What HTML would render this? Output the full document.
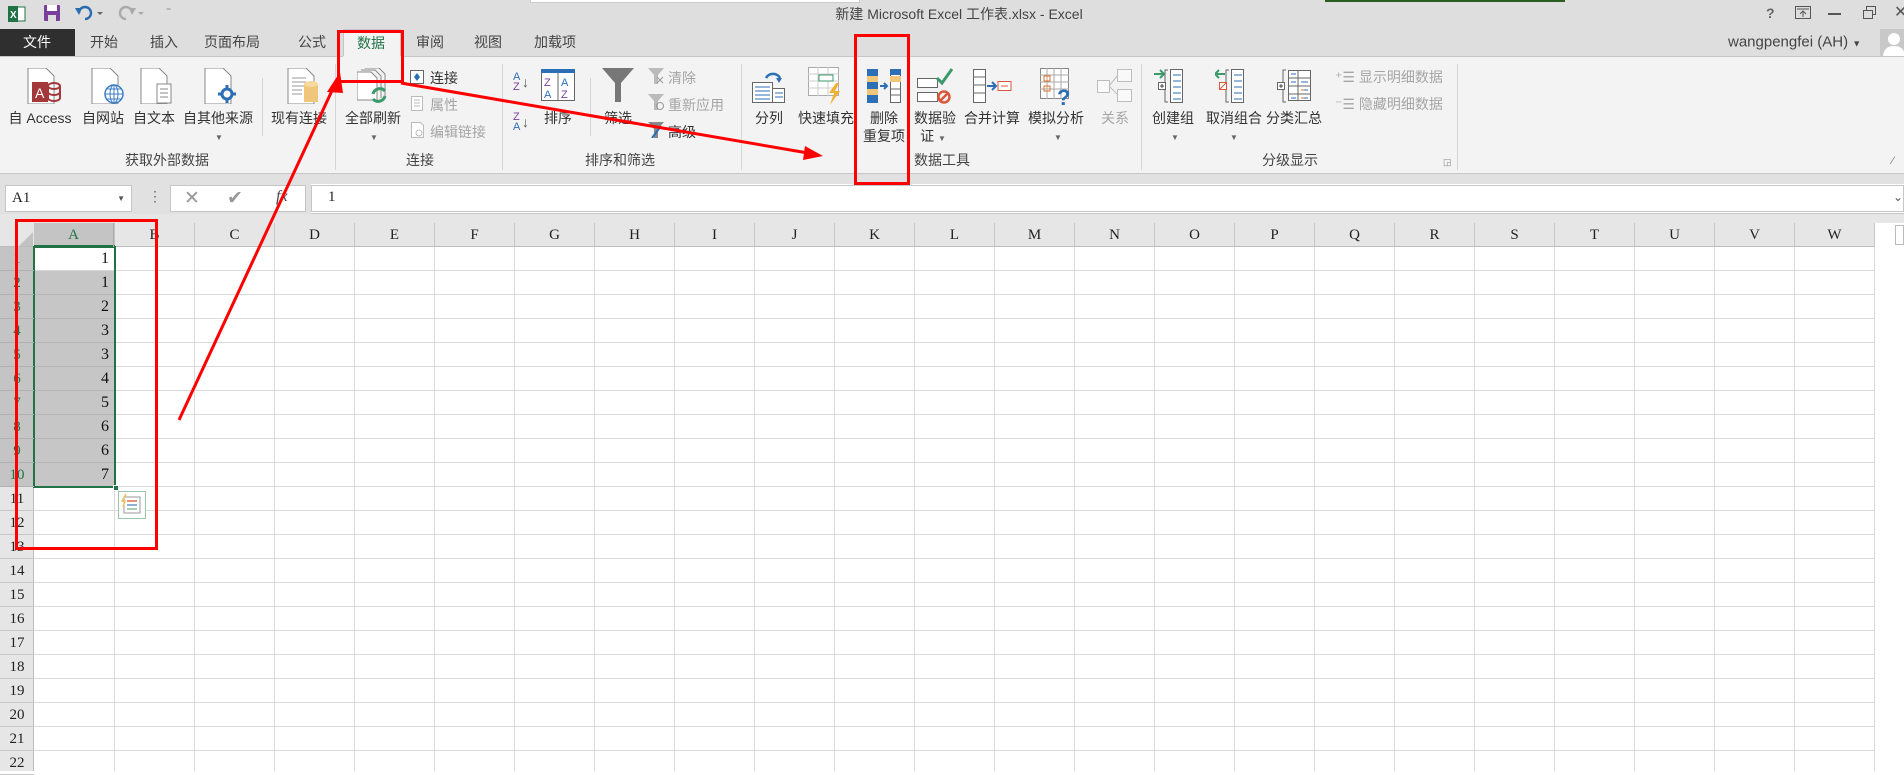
<!DOCTYPE html>
<html><head><meta charset="utf-8"><style>
*{margin:0;padding:0;box-sizing:border-box}
body{width:1904px;height:771px;overflow:hidden;background:#fff;position:relative;font-family:"Liberation Sans","Noto Sans CJK SC",sans-serif;font-size:14px;color:#444}
.a{position:absolute;white-space:nowrap}
.t{top:42px;transform:translate(-50%,-50%);font-size:14px;color:#444}
.lb{top:118px;transform:translate(-50%,-50%);color:#333}
.lb2{top:136px;transform:translate(-50%,-50%);color:#333}
.gl{top:160px;transform:translate(-50%,-50%);color:#444}
.sm{font-size:14px;color:#333}
.dis{color:#a5a5a5}
.sep{position:absolute;width:1px;background:#d5d5d5}
.ch{position:absolute;top:223px;height:24px;width:80px;border-right:1px solid #c6c6c6;text-align:center;line-height:24px;font-family:"Liberation Serif",serif;font-size:15px;color:#222}
.rh{position:absolute;left:0;width:34px;height:24px;border-bottom:1px solid #c6c6c6;text-align:center;line-height:24px;font-family:"Liberation Serif",serif;font-size:15px;color:#222}
.cv{position:absolute;left:34px;width:81px;height:24px;text-align:right;padding-right:6px;line-height:24px;font-family:"Liberation Serif",serif;font-size:16px;color:#111}
.dd{position:absolute;font-size:8px;color:#666;transform:translateX(-50%)}
</style></head><body>
<div class="a" style="left:0;top:0;width:1904px;height:56px;background:#dedede"></div>
<div class="a" style="left:530px;top:0;width:330px;height:3px;background:#fff;border:1px solid #ccc;border-top:none"></div>
<div class="a" style="left:1325px;top:0;width:240px;height:2px;background:#2a5d1f"></div>
<svg class="a" style="left:8px;top:5px" width="18" height="18"><rect x="5" y="2" width="12" height="14" fill="#fff" stroke="#217346"/><rect x="0" y="1" width="10" height="16" fill="#217346"/><text x="2" y="13" font-size="10" fill="#fff" font-family="Liberation Sans" font-weight="bold">X</text></svg>
<svg class="a" style="left:44px;top:5px" width="16" height="16"><rect x="0" y="0" width="16" height="16" rx="1" fill="#7a3e9d"/><rect x="3" y="0" width="10" height="6" fill="#fff"/><rect x="4" y="10" width="8" height="6" fill="#ddd"/></svg>
<svg class="a" style="left:75px;top:5px" width="30" height="16"><path d="M4 8 A6 6 0 1 1 10 14" fill="none" stroke="#2b6cb0" stroke-width="2.4"/><path d="M0 3 L7 3 L4 10Z" fill="#2b6cb0"/><path d="M22 7 l3 3 l3 -3z" fill="#666"/></svg>
<svg class="a" style="left:118px;top:5px" width="30" height="16"><path d="M14 8 A6 6 0 1 0 8 14" fill="none" stroke="#aaa" stroke-width="2.4"/><path d="M18 3 L11 3 L14 10Z" fill="#aaa"/><path d="M20 7 l3 3 l3 -3z" fill="#aaa"/></svg>
<div class="a" style="left:166px;top:6px;font-size:10px;color:#777">⁼</div>
<div class="a" style="left:959px;top:14px;transform:translate(-50%,-50%);font-size:14px;color:#444">新建 Microsoft Excel 工作表.xlsx - Excel</div>
<div class="a" style="left:1766px;top:5px;font-size:14px;color:#666;font-weight:bold">?</div>
<svg class="a" style="left:1795px;top:6px" width="16" height="14"><rect x="0.5" y="0.5" width="15" height="12" fill="none" stroke="#555"/><path d="M2 3h12M8 5v6M5 8l3-3 3 3" fill="none" stroke="#555"/></svg>
<div class="a" style="left:1828px;top:13px;width:13px;height:2px;background:#555"></div>
<svg class="a" style="left:1863px;top:6px" width="14" height="13"><rect x="0.5" y="4.5" width="9" height="8" fill="none" stroke="#555"/><path d="M3.5 4.5v-4h9v8h-3" fill="none" stroke="#555"/></svg>
<div class="a" style="left:1894px;top:2px;font-size:16px;color:#555">✕</div>
<div class="a" style="left:1728px;top:42px;transform:translateY(-50%);font-size:15px;color:#444">wangpengfei (AH) <span style="font-size:9px">▼</span></div>
<svg class="a" style="left:1880px;top:29px" width="24" height="27"><rect width="24" height="27" fill="#c8c8c8"/><circle cx="14" cy="10" r="6" fill="#fff"/><path d="M3 27 Q4 17 14 17 Q24 17 25 27Z" fill="#fff"/></svg>
<div class="a" style="left:0;top:29px;width:75px;height:27px;background:#2f2f2f"></div>
<div class="a t" style="left:37px;color:#fff">文件</div>
<div class="a t" style="left:104px">开始</div>
<div class="a t" style="left:164px">插入</div>
<div class="a t" style="left:232px">页面布局</div>
<div class="a t" style="left:312px">公式</div>
<div class="a" style="left:343px;top:29px;width:58px;height:28px;background:#f3f3f3;border:1px solid #c6c6c6;border-bottom:none"></div>
<div class="a t" style="left:371px;color:#217346;top:43px">数据</div>
<div class="a t" style="left:430px">审阅</div>
<div class="a t" style="left:488px">视图</div>
<div class="a t" style="left:555px">加载项</div>
<div class="a" style="left:0;top:56px;width:1904px;height:118px;background:#f3f3f3;border-top:1px solid #c6c6c6;border-bottom:1px solid #c6c6c6"></div>
<div class="a" style="left:343px;top:56px;width:58px;height:2px;background:#f3f3f3"></div>
<div class="a" style="left:0;top:174px;width:1904px;height:10px;background:#e1e1e1"></div>
<svg class="a" style="left:26px;top:68px" width="38" height="36"><path d="M2 0h18l8 8v28H2z" fill="#fff" stroke="#888"/><rect x="6" y="14" width="16" height="20" fill="#a4373a"/><text x="9" y="30" fill="#fff" font-size="14" font-family="Liberation Sans">A</text><ellipse cx="28" cy="18" rx="6" ry="3" fill="none" stroke="#a4373a" stroke-width="2"/><path d="M22 18v12M34 18v12M22 24a6 3 0 0 0 12 0M22 30a6 3 0 0 0 12 0" fill="none" stroke="#a4373a" stroke-width="2"/></svg>
<svg class="a" style="left:90px;top:68px" width="36" height="36"><path d="M2 0h18l8 8v28H2z" fill="#fff" stroke="#888"/><circle cx="24" cy="26" r="9" fill="#fff" stroke="#3b7dc4" stroke-width="1.5"/><path d="M15 26h18M24 17v18M17 21h14M17 31h14" stroke="#3b7dc4"/><ellipse cx="24" cy="26" rx="4" ry="9" fill="none" stroke="#3b7dc4"/></svg>
<svg class="a" style="left:139px;top:68px" width="36" height="36"><path d="M2 0h18l8 8v28H2z" fill="#fff" stroke="#888"/><path d="M18 16h14v19H18z" fill="#fff" stroke="#888"/><path d="M21 21h8M21 25h8M21 29h8" stroke="#888"/></svg>
<svg class="a" style="left:203px;top:68px" width="36" height="36"><path d="M2 0h18l8 8v28H2z" fill="#fff" stroke="#888"/><circle cx="24" cy="26" r="5" fill="none" stroke="#2d6fb7" stroke-width="3"/><path d="M24 17v4M24 31v4M15 26h4M29 26h4" stroke="#2d6fb7" stroke-width="3"/></svg>
<div class="a lb" style="left:40px">自 Access</div>
<div class="a lb" style="left:103px">自网站</div>
<div class="a lb" style="left:154px">自文本</div>
<div class="a lb" style="left:218px">自其他来源</div>
<div class="dd" style="left:219px;top:133px">▼</div>
<div class="sep" style="left:262px;top:78px;height:58px"></div>
<svg class="a" style="left:286px;top:68px" width="36" height="36"><path d="M2 0h18l8 8v28H2z" fill="#fff" stroke="#888"/><path d="M6 10h14M6 14h14M6 18h14M6 22h10M6 26h10" stroke="#999"/><rect x="18" y="16" width="14" height="18" fill="#f0c77a"/><ellipse cx="25" cy="16" rx="7" ry="3" fill="#f6d99c"/></svg>
<div class="a lb" style="left:299px">现有连接</div>
<div class="a gl" style="left:167px">获取外部数据</div>
<div class="sep" style="left:335px;top:64px;height:106px"></div>
<svg class="a" style="left:357px;top:68px" width="34" height="36"><path d="M0 4h14l6 6v22H0z" fill="#fff" stroke="#888"/><path d="M4 2h14l6 6v22" fill="none" stroke="#888"/><path d="M8 0h14l6 6v22" fill="none" stroke="#888"/><path d="M16 26a7 7 0 0 1 12 -3M28 28a7 7 0 0 1 -12 3" fill="none" stroke="#3a9a6a" stroke-width="3"/></svg>
<div class="a lb" style="left:373px">全部刷新</div>
<div class="dd" style="left:374px;top:133px">▼</div>
<svg class="a" style="left:410px;top:70px" width="14" height="14"><rect x="0.5" y="0.5" width="13" height="13" fill="#fff" stroke="#666"/><path d="M7 3l3 4-3 4-3-4z" fill="#2d6fb7"/></svg>
<div class="a sm" style="left:430px;top:68px">连接</div>
<svg class="a dis" style="left:411px;top:96px" width="12" height="15"><rect x="0.5" y="0.5" width="11" height="14" fill="#fff" stroke="#bbb"/><path d="M3 4h6M3 7h6M3 10h6" stroke="#bbb"/></svg>
<div class="a sm dis" style="left:430px;top:95px">属性</div>
<svg class="a" style="left:411px;top:122px" width="14" height="16"><path d="M0.5 0.5h9l3 3v12h-12z" fill="#fff" stroke="#bbb"/><circle cx="8" cy="11" r="3" fill="none" stroke="#bbb"/></svg>
<div class="a sm dis" style="left:430px;top:122px">编辑链接</div>
<div class="a gl" style="left:420px">连接</div>
<div class="sep" style="left:502px;top:64px;height:106px"></div>
<div class="a" style="left:513px;top:72px;font-size:11px;line-height:10px;color:#2d6fb7">A<br><span style="color:#7a3e9d">Z</span></div><div class="a" style="left:522px;top:74px;font-size:14px;color:#555">↓</div>
<div class="a" style="left:513px;top:112px;font-size:11px;line-height:10px;color:#7a3e9d">Z<br><span style="color:#2d6fb7">A</span></div><div class="a" style="left:522px;top:114px;font-size:14px;color:#555">↓</div>
<svg class="a" style="left:541px;top:69px" width="34" height="32"><rect x="0.5" y="0.5" width="33" height="31" fill="#fff" stroke="#666"/><rect x="0" y="0" width="34" height="4" fill="#2d6fb7"/><path d="M17 4v28" stroke="#666"/><text x="3" y="17" font-size="11" fill="#7a3e9d">Z</text><text x="3" y="29" font-size="11" fill="#2d6fb7">A</text><text x="20" y="17" font-size="11" fill="#2d6fb7">A</text><text x="20" y="29" font-size="11" fill="#7a3e9d">Z</text></svg>
<div class="a lb" style="left:558px">排序</div>
<div class="sep" style="left:590px;top:78px;height:58px"></div>
<svg class="a" style="left:602px;top:68px" width="32" height="34"><path d="M0 0h32L19 15v19h-6V15z" fill="#777"/></svg>
<div class="a lb" style="left:618px">筛选</div>
<svg class="a" style="left:648px;top:68px" width="16" height="16"><path d="M0 0h16l-6 7v9h-4V7z" fill="#bbb"/><path d="M9 9l6 6M15 9l-6 6" stroke="#999"/></svg>
<div class="a sm dis" style="left:668px;top:68px">清除</div>
<svg class="a" style="left:648px;top:94px" width="16" height="16"><path d="M0 0h16l-6 7v9h-4V7z" fill="#bbb"/><circle cx="12" cy="12" r="3.5" fill="none" stroke="#999"/></svg>
<div class="a sm dis" style="left:668px;top:95px">重新应用</div>
<svg class="a" style="left:648px;top:122px" width="16" height="16"><path d="M0 0h16l-6 7v9h-4V7z" fill="#888"/><path d="M13 4L4 16" stroke="#2d6fb7" stroke-width="2"/></svg>
<div class="a sm" style="left:668px;top:122px">高级</div>
<div class="a gl" style="left:620px">排序和筛选</div>
<div class="sep" style="left:741px;top:64px;height:106px"></div>
<svg class="a" style="left:752px;top:68px" width="34" height="36"><path d="M14 10a8 8 0 0 1 14 0" fill="none" stroke="#2d6fb7" stroke-width="2.5"/><path d="M24 10l6 0l-3 5z" fill="#2d6fb7"/><rect x="0.5" y="14.5" width="20" height="20" fill="#fff" stroke="#666"/><path d="M3 19h15M3 23h15M3 27h15M3 31h15" stroke="#2d6fb7"/><rect x="20.5" y="20.5" width="12" height="14" fill="#fff" stroke="#666"/><path d="M23 25h8M23 29h8" stroke="#2d6fb7"/></svg>
<div class="a lb" style="left:769px">分列</div>
<svg class="a" style="left:808px;top:67px" width="36" height="38"><rect x="0.5" y="0.5" width="30" height="28" fill="#fff" stroke="#aaa"/><path d="M0 7h31M0 14h31M0 21h31M10 0v29M20 0v29" stroke="#ccc"/><rect x="11" y="8" width="14" height="6" fill="#fff" stroke="#3a9a6a"/><path d="M28 16l-7 10h5l-4 12 10-14h-5l4-8z" fill="#f0b030"/></svg>
<div class="a lb" style="left:826px">快速填充</div>
<svg class="a" style="left:866px;top:68px" width="36" height="36"><rect x="1" y="1" width="11" height="34" fill="#2d6fb7"/><rect x="1" y="8" width="11" height="6" fill="#f0c77a"/><rect x="1" y="21" width="11" height="6" fill="#f0c77a"/><rect x="24.5" y="1.5" width="10" height="33" fill="#fff" stroke="#666"/><rect x="24" y="1" width="11" height="6" fill="#2d6fb7"/><rect x="24" y="8" width="11" height="6" fill="#f0c77a"/><path d="M25 21h10M25 27h10" stroke="#666"/><path d="M14 18h6M18 15l3 3-3 3" fill="none" stroke="#2d6fb7" stroke-width="2"/></svg>
<div class="a lb" style="left:884px">删除</div>
<div class="a lb2" style="left:884px">重复项</div>
<svg class="a" style="left:917px;top:68px" width="36" height="36"><rect x="0.5" y="10.5" width="20" height="9" fill="#fff" stroke="#666"/><rect x="0.5" y="24.5" width="20" height="9" fill="#fff" stroke="#666"/><path d="M20 10l5 5 10-14" fill="none" stroke="#3a9a6a" stroke-width="3"/><circle cx="27" cy="29" r="5.5" fill="none" stroke="#d9583b" stroke-width="2.5"/><path d="M23 33l8-8" stroke="#d9583b" stroke-width="2.5"/></svg>
<div class="a lb" style="left:935px">数据验</div>
<div class="a lb2" style="left:933px">证 <span style="font-size:8px;color:#666">▼</span></div>
<svg class="a" style="left:972px;top:68px" width="40" height="36"><rect x="1.5" y="1.5" width="12" height="33" fill="#fff" stroke="#666"/><path d="M2 9h12M2 17h12M2 25h12" stroke="#666"/><path d="M15 18h8M20 14l4 4-4 4" fill="none" stroke="#2d6fb7" stroke-width="2"/><rect x="26" y="13.5" width="13" height="9" fill="#fff" stroke="#d9583b"/><path d="M29 18h7" stroke="#d9583b"/></svg>
<div class="a lb" style="left:992px">合并计算</div>
<svg class="a" style="left:1040px;top:68px" width="34" height="38"><rect x="0.5" y="0.5" width="28" height="30" fill="#fff" stroke="#888"/><path d="M0 7h29M0 14h29M0 21h29M7 0v31M14 0v31M21 0v31" stroke="#aaa"/><rect x="4" y="8" width="6" height="5" fill="none" stroke="#e07020"/><rect x="4" y="18" width="6" height="5" fill="none" stroke="#e07020"/><text x="17" y="37" font-size="22" font-weight="bold" fill="#2d6fb7" font-family="Liberation Sans">?</text></svg>
<div class="a lb" style="left:1056px">模拟分析</div>
<div class="dd" style="left:1058px;top:133px">▼</div>
<svg class="a" style="left:1097px;top:68px" width="36" height="36" opacity=".5"><rect x="0.5" y="12.5" width="12" height="12" fill="#fff" stroke="#888"/><rect x="20.5" y="1.5" width="14" height="12" fill="#fff" stroke="#888"/><rect x="20.5" y="21.5" width="14" height="12" fill="#fff" stroke="#888"/><path d="M12 18l9-11M12 18l9 9" stroke="#888"/></svg>
<div class="a lb dis" style="left:1115px">关系</div>
<div class="a gl" style="left:942px">数据工具</div>
<div class="sep" style="left:1141px;top:64px;height:106px"></div>
<svg class="a" style="left:1154px;top:68px" width="36" height="36"><path d="M0 6h10M6 2l4 4-4 4" fill="none" stroke="#3a9a6a" stroke-width="2"/><path d="M14 2h-3v32h3" fill="none" stroke="#666"/><rect x="16.5" y="1.5" width="12" height="33" fill="#fff" stroke="#666"/><path d="M19 7h8M19 13h8M19 19h8M19 25h8M19 31h8" stroke="#2d6fb7"/><rect x="4.5" y="14.5" width="7" height="7" fill="#fff" stroke="#666"/><path d="M6 18h4M8 16v4" stroke="#444"/></svg>
<div class="a lb" style="left:1173px">创建组</div>
<div class="dd" style="left:1175px;top:133px">▼</div>
<svg class="a" style="left:1215px;top:68px" width="36" height="36"><path d="M10 6H0M4 2L0 6l4 4" fill="none" stroke="#3a9a6a" stroke-width="2"/><path d="M14 2h-3v32h3" fill="none" stroke="#666"/><rect x="16.5" y="1.5" width="12" height="33" fill="#fff" stroke="#666"/><path d="M19 7h8M19 13h8M19 19h8M19 25h8M19 31h8" stroke="#2d6fb7"/><rect x="4.5" y="14.5" width="7" height="7" fill="#fff" stroke="#d9583b"/><path d="M5 21l6-6" stroke="#d9583b"/></svg>
<div class="a lb" style="left:1234px">取消组合</div>
<div class="dd" style="left:1234px;top:133px">▼</div>
<svg class="a" style="left:1276px;top:68px" width="36" height="36"><path d="M10 2h-3v32h3" fill="none" stroke="#666"/><rect x="12.5" y="2.5" width="22" height="30" fill="#fff" stroke="#666"/><path d="M12 10h23M12 18h23M12 26h23M22 2v31" stroke="#666"/><path d="M15 6h5M15 14h5M25 14h7M25 22h7M15 30h5M25 30h7" stroke="#2d6fb7"/><path d="M25 22h3M25 30h3" stroke="#e07020"/><rect x="1.5" y="14.5" width="7" height="7" fill="#fff" stroke="#666"/><path d="M3 18h4M5 16v4" stroke="#444"/></svg>
<div class="a lb" style="left:1294px">分类汇总</div>
<div class="a sm dis" style="left:1335px;top:67px">⁺☰ 显示明细数据</div>
<div class="a sm dis" style="left:1335px;top:94px">⁻☰ 隐藏明细数据</div>
<div class="a gl" style="left:1290px">分级显示</div>
<div class="a" style="left:1443px;top:157px;font-size:9px;color:#888">◲</div>
<div class="sep" style="left:1457px;top:64px;height:106px"></div>
<div class="a" style="left:1892px;top:155px;font-size:11px;color:#777">⁄</div>
<div class="a" style="left:0;top:184px;width:1904px;height:30px;background:#fff;border-bottom:1px solid #c6c6c6"></div>
<div class="a" style="left:0;top:184px;width:311px;height:30px;background:#e1e1e1"></div>
<div class="a" style="left:5px;top:185px;width:127px;height:27px;background:#fff;border:1px solid #c6c6c6;font-family:'Liberation Serif',serif;font-size:15px;line-height:25px;padding-left:6px;color:#222">A1<span style="position:absolute;right:6px;font-size:8px;color:#555">▼</span></div>
<div class="a" style="left:148px;top:188px;font-size:14px;color:#666">⋮</div>
<div class="a" style="left:170px;top:185px;width:136px;height:27px;background:#fff;border:1px solid #c6c6c6"></div>
<div class="a" style="left:184px;top:187px;font-size:19px;color:#999">✕</div>
<div class="a" style="left:227px;top:187px;font-size:19px;color:#999">✔</div>
<div class="a" style="left:276px;top:188px;font-size:16px;color:#444;font-style:italic;font-family:'Liberation Serif',serif">fx</div>
<div class="a" style="left:311px;top:185px;width:1593px;height:27px;background:#fff;border:1px solid #c6c6c6"></div>
<div class="a" style="left:328px;top:189px;font-size:15px;font-family:'Liberation Serif',serif;color:#222">1</div>
<div class="a" style="left:1893px;top:190px;font-size:12px;color:#555">⌄</div>
<div class="a" style="left:0;top:214px;width:1904px;height:9px;background:#e6e6e6"></div>
<div class="a" style="left:0;top:223px;width:1904px;height:24px;background:#e6e6e6;border-bottom:1px solid #bdbdbd"></div>
<div class="a" style="left:0;top:247px;width:34px;height:524px;background:#e6e6e6;border-right:1px solid #bdbdbd"></div>
<svg class="a" style="left:17px;top:230px" width="16" height="16"><path d="M16 2V16H2z" fill="#c2c2c2"/></svg>
<div class="a" style="left:34px;top:247px;width:1841px;height:524px;background-image:repeating-linear-gradient(to bottom,transparent 0 23px,#dadada 23px 24px)"></div>
<div class="a" style="left:35px;top:247px;width:1840px;height:524px;background-image:repeating-linear-gradient(to right,transparent 0 79px,#dadada 79px 80px)"></div>
<div class="a" style="left:1875px;top:223px;width:29px;height:548px;background:#fff"></div>
<div class="a" style="left:1895px;top:225px;width:9px;height:20px;background:#fff;border:1px solid #bbb"></div>
<div class="a" style="left:34px;top:271px;width:81px;height:216px;background:#c6c6c6;background-image:repeating-linear-gradient(to bottom,transparent 0 23px,#b5b5b5 23px 24px)"></div>
<div class="a" style="left:0;top:247px;width:34px;height:240px;background:#c4c4c4"></div>
<div class="a" style="left:34px;top:223px;width:81px;height:24px;background:#c4c4c4;border-bottom:2px solid #217346"></div>
<div class="a" style="left:33px;top:246px;width:83px;height:242px;border:2px solid #217346"></div>
<div class="a" style="left:113px;top:485px;width:6px;height:6px;background:#217346;border:1px solid #fff"></div>
<div class="ch" style="left:34px;color:#217346;border-right:1px solid #aaa">A</div>
<div class="ch" style="left:115px">B</div><div class="ch" style="left:195px">C</div><div class="ch" style="left:275px">D</div><div class="ch" style="left:355px">E</div><div class="ch" style="left:435px">F</div><div class="ch" style="left:515px">G</div><div class="ch" style="left:595px">H</div><div class="ch" style="left:675px">I</div><div class="ch" style="left:755px">J</div><div class="ch" style="left:835px">K</div><div class="ch" style="left:915px">L</div><div class="ch" style="left:995px">M</div><div class="ch" style="left:1075px">N</div><div class="ch" style="left:1155px">O</div><div class="ch" style="left:1235px">P</div><div class="ch" style="left:1315px">Q</div><div class="ch" style="left:1395px">R</div><div class="ch" style="left:1475px">S</div><div class="ch" style="left:1555px">T</div><div class="ch" style="left:1635px">U</div><div class="ch" style="left:1715px">V</div><div class="ch" style="left:1795px">W</div>
<div class="rh" style="top:247px;color:#217346;border-color:#b0b0b0">1</div><div class="rh" style="top:271px;color:#217346;border-color:#b0b0b0">2</div><div class="rh" style="top:295px;color:#217346;border-color:#b0b0b0">3</div><div class="rh" style="top:319px;color:#217346;border-color:#b0b0b0">4</div><div class="rh" style="top:343px;color:#217346;border-color:#b0b0b0">5</div><div class="rh" style="top:367px;color:#217346;border-color:#b0b0b0">6</div><div class="rh" style="top:391px;color:#217346;border-color:#b0b0b0">7</div><div class="rh" style="top:415px;color:#217346;border-color:#b0b0b0">8</div><div class="rh" style="top:439px;color:#217346;border-color:#b0b0b0">9</div><div class="rh" style="top:463px;color:#217346;border-color:#b0b0b0">10</div>
<div class="rh" style="top:487px">11</div><div class="rh" style="top:511px">12</div><div class="rh" style="top:535px">13</div><div class="rh" style="top:559px">14</div><div class="rh" style="top:583px">15</div><div class="rh" style="top:607px">16</div><div class="rh" style="top:631px">17</div><div class="rh" style="top:655px">18</div><div class="rh" style="top:679px">19</div><div class="rh" style="top:703px">20</div><div class="rh" style="top:727px">21</div><div class="rh" style="top:751px">22</div>
<div class="cv" style="top:247px">1</div><div class="cv" style="top:271px">1</div><div class="cv" style="top:295px">2</div><div class="cv" style="top:319px">3</div><div class="cv" style="top:343px">3</div><div class="cv" style="top:367px">4</div><div class="cv" style="top:391px">5</div><div class="cv" style="top:415px">6</div><div class="cv" style="top:439px">6</div><div class="cv" style="top:463px">7</div>
<svg class="a" style="left:118px;top:491px" width="28" height="28"><rect x="0.5" y="0.5" width="27" height="27" fill="#fff" stroke="#9cc4a8"/><rect x="6" y="6" width="16" height="16" fill="#fff" stroke="#999"/><path d="M9 10h10" stroke="#e8907a" stroke-width="2"/><path d="M9 14h10" stroke="#8fb0d8" stroke-width="2"/><path d="M9 18h10" stroke="#a8cfb6" stroke-width="2"/><path d="M8 3l-4 7h3l-2 6" fill="none" stroke="#f0c060" stroke-width="1.5"/></svg>
<div class="a" style="left:337px;top:30px;width:67px;height:53px;border:3px solid #f00"></div>
<div class="a" style="left:854px;top:34px;width:56px;height:151px;border:3px solid #f00"></div>
<div class="a" style="left:15px;top:219px;width:143px;height:331px;border:3px solid #f00"></div>
<svg class="a" style="left:0;top:0" width="1904" height="771">
<path d="M179 420 L336 82" stroke="#f00" stroke-width="3" fill="none"/>
<path d="M340 72 L327 92 L343 93Z" fill="#f00"/>
<path d="M401 83 L808 153" stroke="#f00" stroke-width="3" fill="none"/>
<path d="M823 156 L805 146 L803 160Z" fill="#f00"/>
</svg>
</body></html>
